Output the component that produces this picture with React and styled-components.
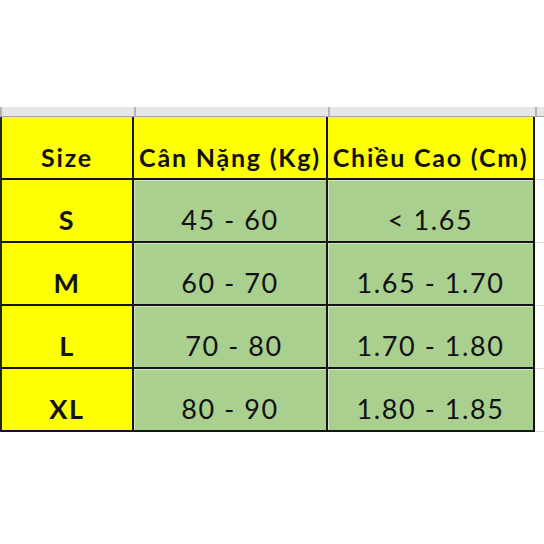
import React from "react";
import styled, { createGlobalStyle } from "styled-components";

const GlobalStyle = createGlobalStyle`
  html, body {
    margin: 0;
    padding: 0;
    background: #ffffff;
  }
  body {
    font-family: Lato, "Open Sans", "Liberation Sans", sans-serif;
    color: #121212;
  }
`;

const COLS = [134, 194, 207];

const Sheet = styled.div`
  width: 544px;
  height: 544px;
  padding-top: 107px;
  box-sizing: border-box;
  overflow: hidden;
`;

const HeaderStrip = styled.div`
  display: flex;
  height: 9px;
  background: #e6e6e6;
  border-bottom: 1px solid #a8a8a8;
`;

const ColHead = styled.div`
  width: ${(p) => p.$w}px;
  flex: ${(p) => (p.$w ? "none" : "1")};
  border-left: 2px solid #b4b4bc;
  box-sizing: border-box;
`;

const Grid = styled.div`
  display: grid;
  grid-template-columns: ${COLS.map((c) => c + "px").join(" ")} 1fr;
  grid-auto-rows: 63px;
`;

const Cell = styled.div`
  display: flex;
  align-items: flex-end;
  justify-content: center;
  box-sizing: border-box;
  padding-bottom: 8px;
  padding-left: ${(p) => p.$shift || 0}px;
  background: ${(p) => (p.$tone === "green" ? "#a9d08e" : "#ffff04")};
  border-right: 2px solid #141414;
  border-bottom: 2px solid #141414;
  border-left: ${(p) => (p.$first ? "2px solid #1c2a12" : "none")};
  box-shadow: ${(p) =>
    p.$tone === "green" ? "inset 1px 1px 0 rgba(255,255,255,0.45)" : "none"};
  font-size: ${(p) => (p.$head ? 25 : 27)}px;
  font-weight: ${(p) => (p.$bold ? 700 : 400)};
  white-space: nowrap;
  line-height: 1;
  letter-spacing: ${(p) => (p.$head ? "1.8px" : "1.6px")};
`;

const Stub = styled.div`
  border-bottom: 1px solid #dcdcdc;
  background: #ffffff;
`;

const rows = [
  { size: "S", kg: "45 - 60", cm: "< 1.65" },
  { size: "M", kg: "60 - 70", cm: "1.65 - 1.70" },
  { size: "L", kg: "70 - 80", cm: "1.70 - 1.80", shift: 8 },
  { size: "XL", kg: "80 - 90", cm: "1.80 - 1.85" },
];

export default function App() {
  return (
    <>
      <GlobalStyle />
      <Sheet>
        <HeaderStrip>
          <ColHead $w={COLS[0]} />
          <ColHead $w={COLS[1]} />
          <ColHead $w={COLS[2]} />
          <ColHead />
        </HeaderStrip>
        <Grid>
          <Cell $first $head $bold>Size</Cell>
          <Cell $head $bold>Cân Nặng (Kg)</Cell>
          <Cell $head $bold>Chiều Cao (Cm)</Cell>
          <Stub />
          {rows.map((r) => (
            <React.Fragment key={r.size}>
              <Cell $first $bold>{r.size}</Cell>
              <Cell $tone="green" $shift={r.shift}>{r.kg}</Cell>
              <Cell $tone="green">{r.cm}</Cell>
              <Stub />
            </React.Fragment>
          ))}
        </Grid>
      </Sheet>
    </>
  );
}
